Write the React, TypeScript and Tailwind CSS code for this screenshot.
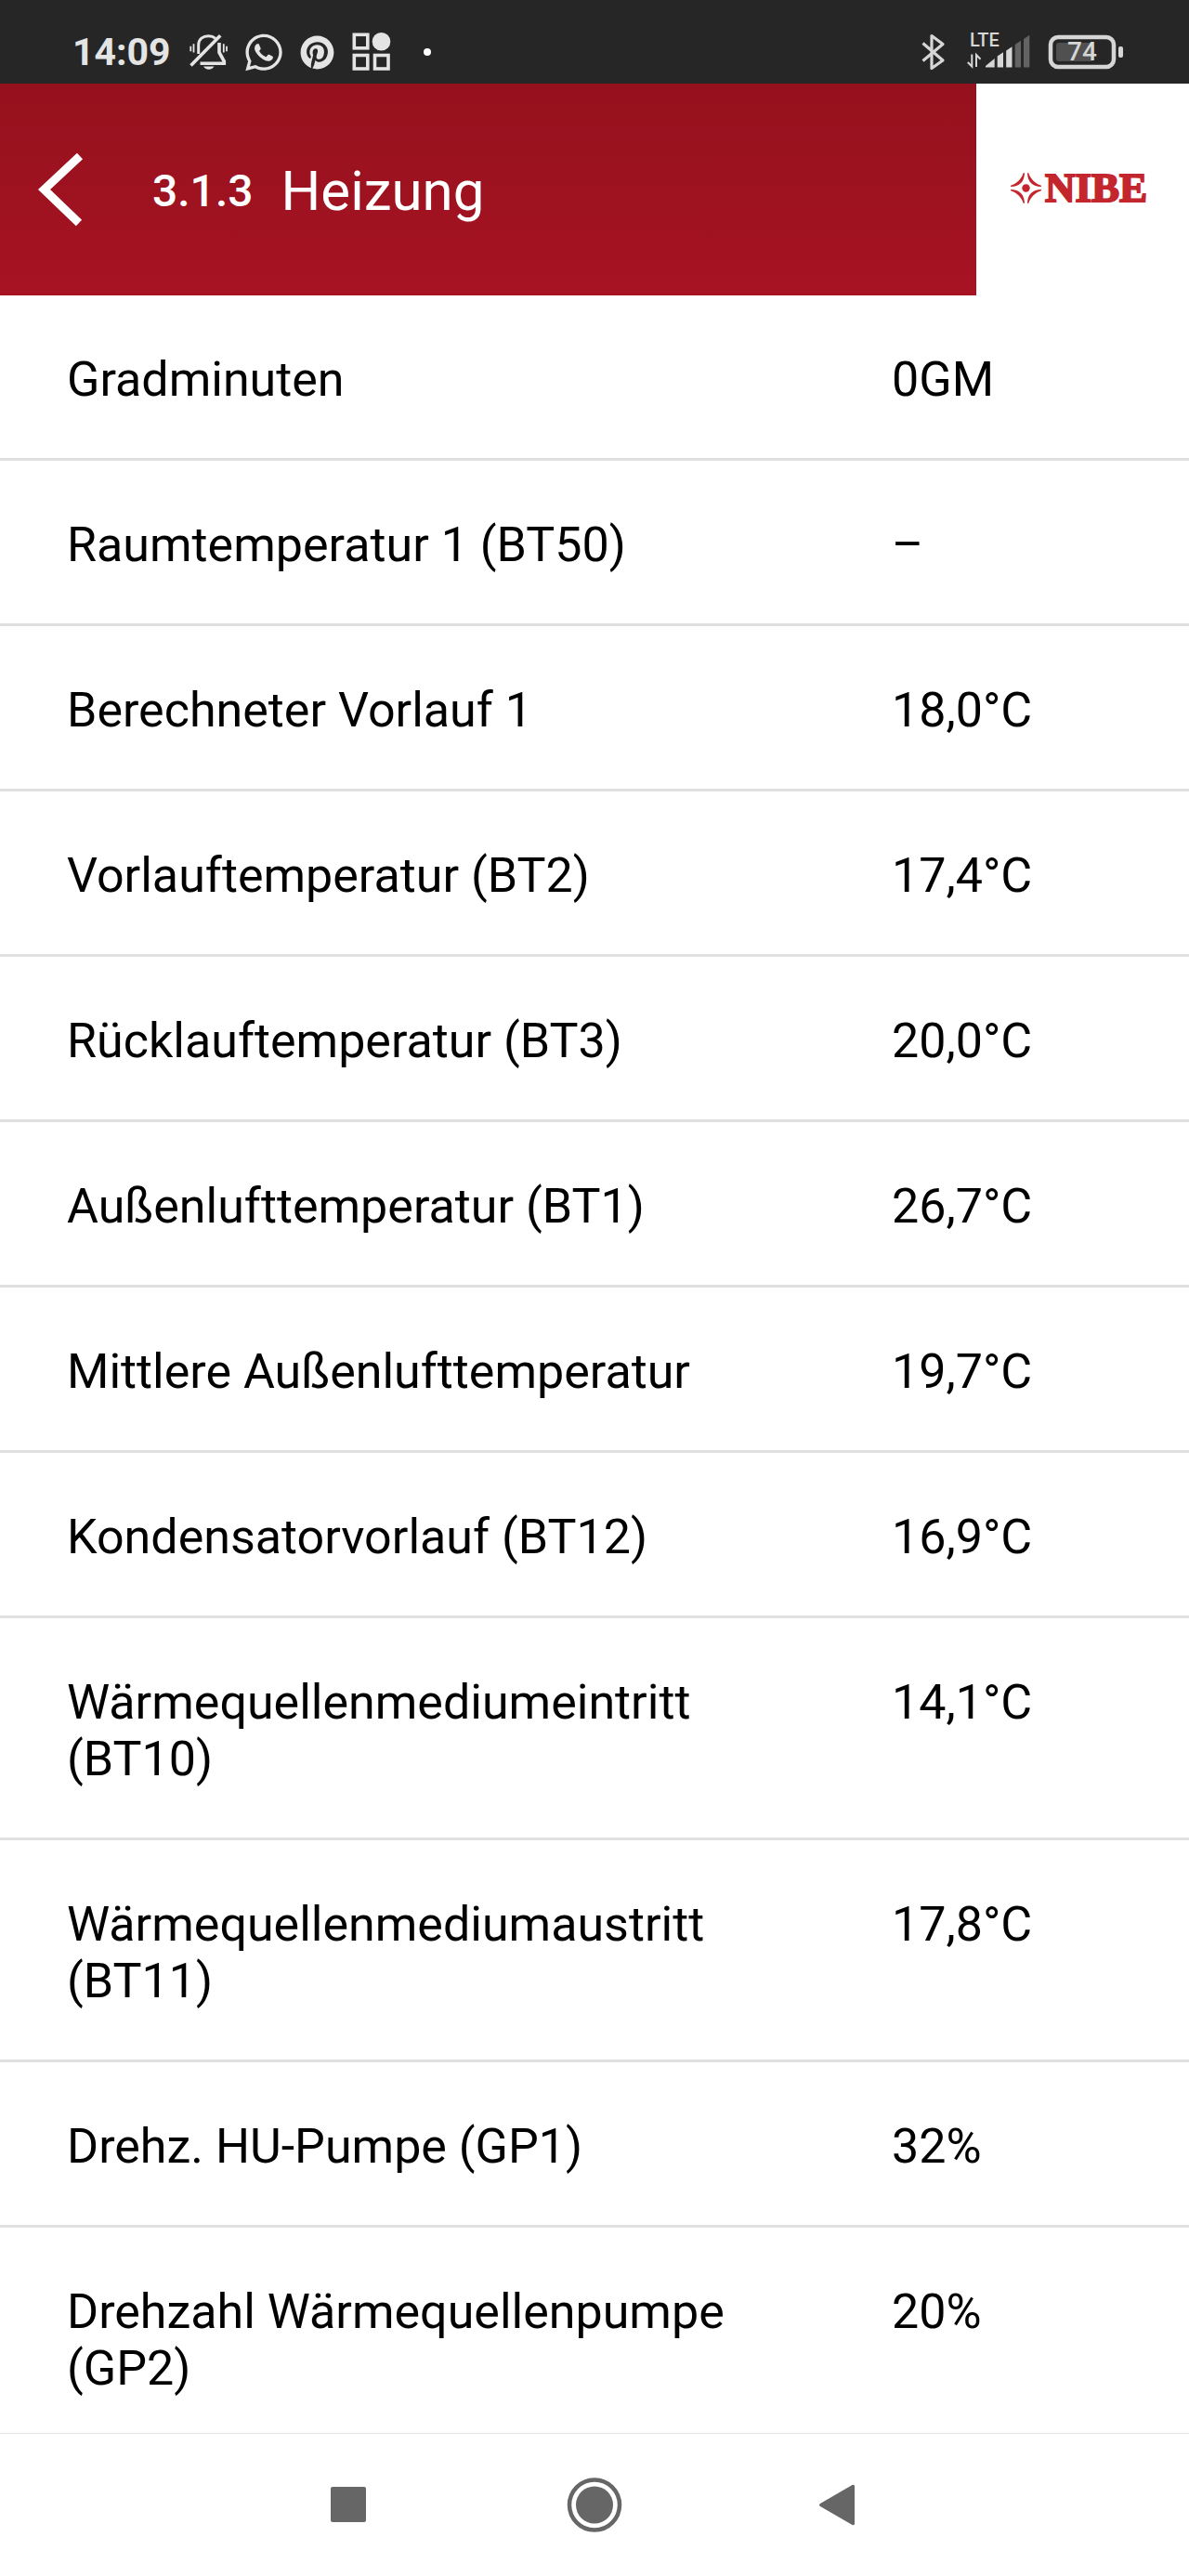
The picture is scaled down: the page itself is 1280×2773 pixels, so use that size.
import React from 'react';
import { FaPinterest, FaWhatsapp } from 'react-icons/fa';

interface Reading {
  label: string;
  value: string;
}

const READINGS: Reading[] = [
  { label: 'Gradminuten', value: '0GM' },
  { label: 'Raumtemperatur 1 (BT50)', value: '–' },
  { label: 'Berechneter Vorlauf 1', value: '18,0°C' },
  { label: 'Vorlauftemperatur (BT2)', value: '17,4°C' },
  { label: 'Rücklauftemperatur (BT3)', value: '20,0°C' },
  { label: 'Außenlufttemperatur (BT1)', value: '26,7°C' },
  { label: 'Mittlere Außenlufttemperatur', value: '19,7°C' },
  { label: 'Kondensatorvorlauf (BT12)', value: '16,9°C' },
  { label: 'Wärmequellenmediumeintritt (BT10)', value: '14,1°C' },
  { label: 'Wärmequellenmediumaustritt (BT11)', value: '17,8°C' },
  { label: 'Drehz. HU-Pumpe (GP1)', value: '32%' },
  { label: 'Drehzahl Wärmequellenpumpe (GP2)', value: '20%' },
];

const MutedBellIcon = () => (
  <svg width="42" height="42" viewBox="0 0 42 42" fill="none" stroke="currentColor" strokeWidth="3" aria-hidden="true">
    <path d="M10.7 23V13.5C10.7 7 15.5 3.8 21.5 3.8c3 0 5.500.9 7.500 2.600" />
    <path d="M33 11v10.500l5.300 9.500v2.300H12.500" strokeWidth="3.600" />
    <path d="M2.500 35.500L34.200 3.300" strokeWidth="3.600" />
    <path d="M16 36.500h11.500c-1 2-3 3.200-5.700 3.200s-4.800-1.200-5.800-3.200z" fill="currentColor" stroke="none" />
    <path d="M2.300 14.700v5.500M5.500 12.300v9.200M37.800 12.300v9.200M41 14.700v5.500" strokeWidth="1.800" />
  </svg>
);

const AppsIcon = () => (
  <svg width="42" height="42" viewBox="0 0 42 42" fill="none" stroke="currentColor" strokeWidth="3.600" aria-hidden="true">
    <rect x="2.300" y="2.300" width="14.500" height="14.500" />
    <rect x="2.300" y="24.500" width="14.500" height="14.500" />
    <rect x="24.500" y="24.500" width="14.500" height="14.500" />
    <circle cx="31.500" cy="9.800" r="9.800" fill="currentColor" stroke="none" />
  </svg>
);

const BluetoothIcon = () => (
  <svg width="30" height="42" viewBox="0 0 30 42" fill="none" stroke="currentColor" strokeWidth="3.200" aria-hidden="true">
    <path d="M1.500 11.500L23 30 11 38.500v-35L23 12.500 1.500 30.500" strokeLinejoin="round" />
  </svg>
);

const SignalIcon = () => (
  <div className="relative">
    <svg width="70" height="42" viewBox="0 0 70 42" fill="currentColor" aria-hidden="true">
      <path d="M6.300 23.500v13L1.800 32M11 37V24l4.500 4.800" fill="none" stroke="currentColor" strokeWidth="2" />
      <path d="M21 37.500v-1.500l9.700-8v9.500z" />
      <path d="M33.700 37.500v-12l6.300-4.200v16.200z" />
      <path d="M43.200 37.500V19.500l6.300-4.200v22.200z" />
      <path d="M52.700 37.500V13l6.300-4.200v28.700zM62 37.500V7l6.300-4.200v34.700z" fill="#636363" />
    </svg>
    <span className="absolute top-0 left-1 text-[20px] leading-4 font-medium">LTE</span>
  </div>
);

const BatteryIcon = () => (
  <div className="relative">
    <svg width="82" height="38" viewBox="0 0 82 38" fill="none" aria-hidden="true">
      <rect x="3" y="3" width="68" height="32" rx="8" stroke="currentColor" strokeWidth="4.500" />
      <rect x="9" y="9" width="40" height="20" rx="3" fill="#505050" />
      <rect x="76" y="13" width="5" height="12" rx="2" fill="currentColor" />
    </svg>
    <span className="absolute inset-y-0 left-0 w-[74px] text-center text-[28px] leading-[38px] font-medium">74</span>
  </div>
);

const StatusBar = () => (
  <div className="flex h-[90px] shrink-0 items-center justify-between bg-[#262626] pt-[22px] pr-[70px] pl-[78px] text-[#e4e4e4]">
    <div className="flex items-center gap-[19px]">
      <span className="text-[41px] leading-none font-bold">14:09</span>
      <MutedBellIcon />
      <FaWhatsapp className="h-[45px] w-10" />
      <FaPinterest size={37} />
      <AppsIcon />
      <span className="ml-4 h-2 w-2 rounded-full bg-white" />
    </div>
    <div className="flex items-center gap-[18px] text-[#d6d6d6]">
      <BluetoothIcon />
      <SignalIcon />
      <BatteryIcon />
    </div>
  </div>
);

const NibeLogo = () => (
  <div className="flex items-center gap-1 text-[#c4262d]">
    <svg width="33" height="33" viewBox="0 0 33 33" fill="currentColor" aria-hidden="true">
      <circle cx="16.500" cy="16.500" r="4.200" />
      <path d="M15 0C15 9.500 9.500 15 0 15c0-.5 0-1 .5-1.500C6 12 12 6.500 13.500.5z" />
      <path d="M18 0C18 9.500 23.500 15 33 15c0-.5 0-1-.5-1.500C27 12 21 6.500 19.500.5z" />
      <path d="M15 33C15 23.500 9.500 18 0 18c0 .5 0 1 .5 1.500C6 21 12 26.500 13.500 32.500z" />
      <path d="M18 33C18 23.500 23.500 18 33 18c0 .5 0 1-.5 1.500C27 21 21 26.500 19.500 32.500z" />
    </svg>
    <span className="font-['Liberation_Serif',serif] text-[45px] leading-8 font-bold [-webkit-text-stroke:2px]">NIBE</span>
  </div>
);

const Header = () => (
  <header className="flex h-[228px] shrink-0">
    <div className="flex flex-1 items-center bg-linear-to-b from-[#95111d] to-[#a71323] pl-10 text-white">
      <button type="button" aria-label="Zurück" className="mr-[72px]">
        <svg width="52" height="80" viewBox="0 0 52 80" fill="none" stroke="currentColor" strokeWidth="9" aria-hidden="true">
          <path d="M46 4L7.500 40 45 76" />
        </svg>
      </button>
      <div className="flex items-center gap-[30px] pt-1">
        <span className="text-[48px] leading-none font-medium">3.1.3</span>
        <h1 className="text-[60px] leading-none">Heizung</h1>
      </div>
    </div>
    <div className="flex w-[229px] items-center justify-center bg-white pr-2 pb-1">
      <NibeLogo />
    </div>
  </header>
);

const ReadingsTable = () => (
  <table className="w-full table-fixed text-left text-[52px] leading-[61px] text-black">
    <tbody>
      {READINGS.map((reading) => (
        <tr key={reading.label} className="border-b-3 border-[#e0e0e0] align-top">
          <th scope="row" className="w-3/4 pt-[60px] pr-24 pb-[54px] pl-[72px] font-normal">
            {reading.label}
          </th>
          <td className="pt-[60px] pb-[54px]">{reading.value}</td>
        </tr>
      ))}
    </tbody>
  </table>
);

const NavigationBar = () => (
  <nav className="flex h-[154px] shrink-0 items-center justify-center gap-[205px] border-t border-[#e4e4e4] bg-white text-[#666666]">
    <button type="button" aria-label="Letzte Apps">
      <svg width="60" height="60" viewBox="0 0 60 60" fill="currentColor" aria-hidden="true">
        <rect x="11" y="10" width="38" height="38" rx="2" />
      </svg>
    </button>
    <button type="button" aria-label="Startseite">
      <svg width="60" height="60" viewBox="0 0 60 60" fill="currentColor" aria-hidden="true">
        <circle cx="30" cy="29.500" r="27" fill="none" stroke="currentColor" strokeWidth="4.500" />
        <circle cx="30" cy="29.500" r="20" />
      </svg>
    </button>
    <button type="button" aria-label="Zurück">
      <svg width="60" height="60" viewBox="0 0 60 60" fill="currentColor" aria-hidden="true">
        <path d="M8 28L42.500 8q2.500-1 2.500 1.500v40q0 2.500-2.500 1.500L8 31q-2-1.500 0-3z" />
      </svg>
    </button>
  </nav>
);

const App: React.FC = () => {
  return (
    <div className="flex h-screen flex-col bg-white font-[Roboto,sans-serif]">
      <StatusBar />
      <Header />
      <main className="min-h-0 flex-1 overflow-y-auto [scrollbar-width:none]">
        <ReadingsTable />
      </main>
      <NavigationBar />
    </div>
  );
};

export default App;
